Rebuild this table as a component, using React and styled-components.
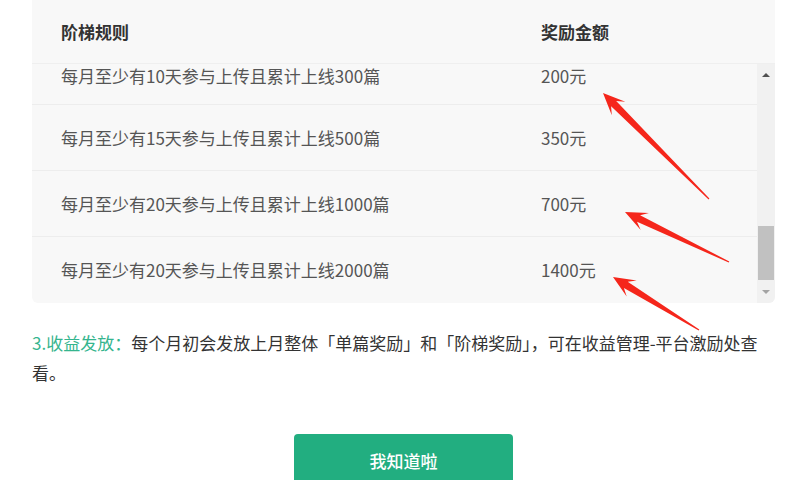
import React, { useEffect, useRef } from "react";
import styled, { createGlobalStyle } from "styled-components";

const GlobalStyle = createGlobalStyle`
  * { box-sizing: border-box; margin: 0; padding: 0; }
  body {
    margin: 0;
    background: #fff;
    font-family: "Noto Sans CJK SC", "Noto Sans", sans-serif;
  }
`;

const Page = styled.div`
  position: relative;
  width: 800px;
  height: 480px;
  overflow: hidden;
  padding: 0 25px 0 32px;
  background: #fff;
`;

const Panel = styled.div`
  width: 743px;
  background: #f8f8f8;
  border-radius: 0 0 6px 6px;
  overflow: hidden;
`;

const Cols = styled.div`
  display: grid;
  grid-template-columns: 480px 1fr;
  align-items: center;
  padding-left: 29px;
  font-size: 17px;
  line-height: 20px;
`;

const HeadRow = styled(Cols)`
  height: 64px;
  color: #333;
  font-weight: 700;
  border-bottom: 1px solid #efefef;
`;

const BodyWrap = styled.div`
  display: flex;
  height: 239px;
`;

const ScrollBody = styled.div`
  flex: 1;
  overflow-y: auto;
  scrollbar-width: none;
  &::-webkit-scrollbar { display: none; }
`;

const Row = styled(Cols)`
  height: ${(p) => (p.$first ? "62px" : "66px")};
  padding-top: ${(p) => (p.$first ? "4px" : "0")};
  color: #555;
  border-bottom: 1px solid ${(p) => (p.$last ? "transparent" : "#ededed")};
`;

const Scrollbar = styled.div`
  width: 18px;
  display: flex;
  flex-direction: column;
  background: #f1f1f1;
`;

const ArrowBtn = styled.div`
  height: 22px;
  display: flex;
  align-items: center;
  justify-content: center;
  &::before {
    content: "";
    border-left: 4px solid transparent;
    border-right: 4px solid transparent;
    ${(p) =>
      p.$down
        ? "border-top: 4px solid #a3a3a3;"
        : "border-bottom: 4px solid #505050;"}
  }
`;

const Track = styled.div`
  flex: 1;
  display: flex;
  flex-direction: column;
  justify-content: flex-end;
  padding: 0 1px 1px;
`;

const Thumb = styled.div`
  height: 54px;
  background: #c1c1c1;
`;

const Note = styled.p`
  margin-top: 25px;
  font-size: 17px;
  line-height: 30px;
  color: #333;
`;

const Label = styled.span`
  color: #35b58e;
`;

const Footer = styled.div`
  display: flex;
  justify-content: center;
  margin-top: 46px;
`;

const Button = styled.button`
  width: 219px;
  height: 52px;
  border: none;
  border-radius: 4px;
  background: #22ae80;
  color: #fff;
  font-family: inherit;
  font-size: 17px;
  font-weight: 500;
`;

const Overlay = styled.svg`
  position: absolute;
  left: 0;
  top: 0;
  pointer-events: none;
`;

const rows = [
  ["每月至少有10天参与上传且累计上线300篇", "200元"],
  ["每月至少有15天参与上传且累计上线500篇", "350元"],
  ["每月至少有20天参与上传且累计上线1000篇", "700元"],
  ["每月至少有20天参与上传且累计上线2000篇", "1400元"],
];

// tip and tail of each red annotation arrow
const arrows = [
  { tip: [603, 93], tail: [709, 199] },
  { tip: [625, 212], tail: [729, 262] },
  { tip: [613, 277], tail: [699, 330] },
];

function arrowPoints({ tip, tail }) {
  const [tx, ty] = tip;
  const [sx, sy] = tail;
  const len = Math.hypot(tx - sx, ty - sy);
  const ux = (tx - sx) / len;
  const uy = (ty - sy) / len;
  const nx = -uy;
  const ny = ux;
  const at = (back, side) => [tx - ux * back + nx * side, ty - uy * back + ny * side];
  const pts = [
    [sx + nx * 0.6, sy + ny * 0.6],
    at(15, 3.6),
    at(22, 9.5),
    [tx, ty],
    at(22, -9.5),
    at(15, -3.6),
    [sx - nx * 0.6, sy - ny * 0.6],
  ];
  return pts.map((p) => p.map((v) => v.toFixed(1)).join(",")).join(" ");
}

export default function App() {
  const bodyRef = useRef(null);

  useEffect(() => {
    const el = bodyRef.current;
    if (el) el.scrollTop = el.scrollHeight;
  }, []);

  return (
    <Page>
      <GlobalStyle />
      <Panel>
        <HeadRow>
          <span>阶梯规则</span>
          <span>奖励金额</span>
        </HeadRow>
        <BodyWrap>
          <ScrollBody ref={bodyRef}>
            {rows.map(([rule, reward], i) => (
              <Row key={rule} $first={i === 0} $last={i === rows.length - 1}>
                <span>{rule}</span>
                <span>{reward}</span>
              </Row>
            ))}
          </ScrollBody>
          <Scrollbar>
            <ArrowBtn />
            <Track>
              <Thumb />
            </Track>
            <ArrowBtn $down />
          </Scrollbar>
        </BodyWrap>
      </Panel>

      <Note>
        <Label>3.收益发放：</Label>
        <span>每个月初会发放上月整体「单篇奖励」和「阶梯奖励」，可在收益管理-平台激励处查看。</span>
      </Note>

      <Footer>
        <Button>我知道啦</Button>
      </Footer>

      <Overlay width="800" height="480" viewBox="0 0 800 480">
        {arrows.map((a, i) => (
          <polygon key={i} points={arrowPoints(a)} fill="#f5261b" />
        ))}
      </Overlay>
    </Page>
  );
}
